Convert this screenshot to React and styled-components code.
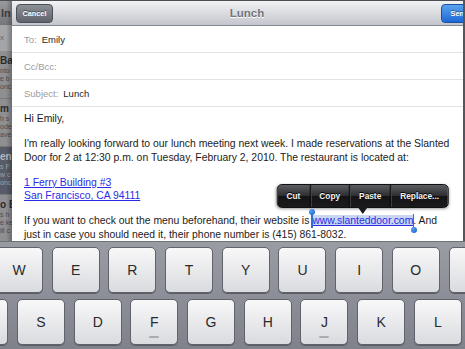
import React from 'react'
import styled, { createGlobalStyle } from 'styled-components'

const GlobalStyle = createGlobalStyle`
    html, body {
        margin: 0;
        padding: 0;
        background: #888;
        overflow: hidden;
    }
    #root {
        width: 465px;
        height: 349px;
    }
`

const Screen = styled.div`
    width: 465px;
    height: 349px;
    overflow: hidden;
    display: flex;
    flex-direction: column;
    font-family: "Liberation Sans", Arial, sans-serif;
    border-top: 1px solid #4e4f53;
    box-sizing: border-box;
`

const Upper = styled.div`
    height: 240px;
    display: flex;
    flex-shrink: 0;
`

/* dimmed mail list behind the compose sheet */
const ListStrip = styled.div`
    width: 12px;
    flex-shrink: 0;
    overflow: hidden;
    display: flex;
    flex-direction: column;
    background: #8d8d8f;
    position: relative;

    &::after {
        content: '';
        position: absolute;
        top: 0;
        right: 0;
        bottom: 0;
        width: 6px;
        background: linear-gradient(to right, rgba(0,0,0,0), rgba(0,0,0,0.25));
    }
`

const StripBar = styled.div`
    height: 24px;
    flex-shrink: 0;
    background: linear-gradient(#9a9b9f, #75767b);
    color: #3c3d42;
    font-size: 11px;
    font-weight: bold;
    line-height: 24px;
    padding-left: 1px;
    white-space: nowrap;
`

const StripSearch = styled.div`
    height: 26px;
    flex-shrink: 0;
    background: #a4a5a8;
    color: #6a6a6e;
    font-size: 8px;
    line-height: 26px;
    white-space: nowrap;
`

const StripItem = styled.div`
    height: 48px;
    flex-shrink: 0;
    box-sizing: border-box;
    padding-top: 4px;
    background: ${({ selected }) => (selected ? '#575c68' : '#8f8f91')};
    border-bottom: 1px solid #7a7a7c;
    white-space: nowrap;
    font-size: 7px;
    line-height: 8px;
    color: ${({ selected }) => (selected ? '#9ea3ad' : '#4a4a4e')};

    b {
        display: block;
        font-size: 10px;
        line-height: 12px;
        color: ${({ selected }) => (selected ? '#b5b9c2' : '#2a2a2c')};
    }
`

const Sheet = styled.div`
    flex: 1;
    overflow: hidden;
    display: flex;
    flex-direction: column;
    background: #fff;
    border-right: 2px solid #55565a;
`

const NavBar = styled.div`
    height: 24px;
    flex-shrink: 0;
    margin-right: -19px;
    padding: 0 4px;
    display: grid;
    grid-template-columns: 1fr auto 1fr;
    align-items: center;
    background: linear-gradient(#f1f2f4, #c3c6cc);
    border-bottom: 1px solid #858991;
`

const BarButton = styled.div`
    height: 19px;
    width: 37px;
    border-radius: 4px;
    box-sizing: border-box;
    display: flex;
    align-items: center;
    justify-content: center;
    justify-self: ${({ end }) => (end ? 'end' : 'start')};
    font-size: 7.3px;
    font-weight: bold;
    color: #fff;
    text-shadow: 0 -1px 0 rgba(0,0,0,0.4);
    border: 1px solid ${({ blue }) => (blue ? '#1d4f9c' : '#4e5057')};
    background: ${({ blue }) =>
        blue ? 'linear-gradient(#5aa2f0, #1e68d6)' : 'linear-gradient(#8c9097, #60636b)'};
`

const Title = styled.div`
    font-size: 11.5px;
    font-weight: bold;
    color: #71767f;
    text-shadow: 0 1px 0 #fff;
`

const Field = styled.div`
    height: 26px;
    flex-shrink: 0;
    display: flex;
    align-items: center;
    gap: 5px;
    padding-left: 12px;
    border-bottom: 1.5px solid #e3e3e5;
    font-size: 9.5px;
`

const Label = styled.span`
    color: #9b9b9e;
`

const Value = styled.span`
    color: #1e1e1e;
`

const Body = styled.div`
    padding: 5px 0 0 12px;
    font-size: 10.4px;
    line-height: 13.7px;
    color: #1c1c1c;
    white-space: nowrap;
`

const Para = styled.p`
    margin: 0 0 11.3px;
`

const Link = styled.span`
    color: #2b2be6;
    text-decoration: underline;
`

const Selection = styled.span`
    position: relative;
    background: #c9d6f2;
    color: #2b2be6;
    text-decoration: underline;
`

const Handle = styled.span`
    position: absolute;
    width: 1.5px;
    height: 15px;
    background: #2a6fd8;
    ${({ end }) => (end ? 'right: -1px; top: -1px;' : 'left: -1px; top: -2px;')}

    &::after {
        content: '';
        position: absolute;
        left: -2.25px;
        width: 6px;
        height: 6px;
        border-radius: 50%;
        background: radial-gradient(circle at 35% 35%, #5aa0ff, #0f58c8);
        ${({ end }) => (end ? 'bottom: -4px;' : 'top: -4px;')}
    }
`

const EditMenu = styled.div`
    position: absolute;
    bottom: 18px;
    left: 50%;
    transform: translateX(-50%);
    height: 22px;
    display: flex;
    border-radius: 5px;
    border: 1px solid #111;
    background: linear-gradient(#5c5d60 0%, #2c2d30 50%, #141416 51%, #1b1b1d 100%);
    box-shadow: 0 1px 3px rgba(0,0,0,0.4);

    &::after {
        content: '';
        position: absolute;
        left: 50%;
        top: 100%;
        margin-left: -5px;
        border: 5px solid transparent;
        border-top: 7px solid #1a1a1c;
        border-bottom: none;
    }
`

const MenuItem = styled.span`
    display: flex;
    align-items: center;
    padding: 0 9px;
    font-size: 8.3px;
    font-weight: bold;
    color: #f4f4f4;
    text-shadow: 0 -1px 0 #000;
    border-left: ${({ first }) => (first ? 'none' : '1px solid #0c0c0d')};
    box-shadow: ${({ first }) => (first ? 'none' : 'inset 1px 0 0 #4a4b4e')};
`

const Keyboard = styled.div`
    flex: 1;
    display: flex;
    flex-direction: column;
    gap: 6px;
    padding-top: 5px;
    overflow: hidden;
    background: linear-gradient(#9a9ca4, #7f828b);
    border-top: 1px solid #70727a;
`

const KeyRow = styled.div`
    display: flex;
    gap: 8.7px;
    margin-left: ${({ offset }) => offset}px;
`

const Key = styled.div`
    position: relative;
    width: 48px;
    height: 46px;
    flex-shrink: 0;
    box-sizing: border-box;
    border-radius: 5px;
    border: 1px solid #60636b;
    background: linear-gradient(#f8f8f9, #dadbdf);
    box-shadow: 0 1px 0 #5b5d64;
    display: flex;
    align-items: center;
    justify-content: center;
    font-size: 14px;
    color: #2a2a2c;

    &::after {
        content: '';
        display: ${({ bump }) => (bump ? 'block' : 'none')};
        position: absolute;
        left: 50%;
        bottom: 6px;
        width: 10px;
        margin-left: -5px;
        height: 2px;
        border-radius: 1px;
        background: #aaacb1;
    }
`

const stripItems = [
    { title: 'Ba', lines: ['nto', 'e b', 'onc'] },
    { title: 'm', lines: ['h s', 'ode', 'ave'] },
    { title: 'en', lines: ['s F', 'w c', 'onc'], selected: true },
    { title: 'o Bi', lines: ['s h', 'e ke', 'ill c'] },
]

const rowOne = ['W', 'E', 'R', 'T', 'Y', 'U', 'I', 'O', 'P']
const rowTwo = ['A', 'S', 'D', 'F', 'G', 'H', 'J', 'K', 'L']

function App() {
    return (
        <>
            <GlobalStyle />
            <Screen>
                <Upper>
                    <ListStrip>
                        <StripBar>In</StripBar>
                        <StripSearch>x</StripSearch>
                        {stripItems.map((item) => (
                            <StripItem key={item.title} selected={item.selected}>
                                <b>{item.title}</b>
                                {item.lines.map((l) => <div key={l}>{l}</div>)}
                            </StripItem>
                        ))}
                    </ListStrip>

                    <Sheet>
                        <NavBar>
                            <BarButton>Cancel</BarButton>
                            <Title>Lunch</Title>
                            <BarButton end blue>Send</BarButton>
                        </NavBar>
                        <Field><Label>To:</Label><Value>Emily</Value></Field>
                        <Field><Label>Cc/Bcc:</Label></Field>
                        <Field><Label>Subject:</Label><Value>Lunch</Value></Field>

                        <Body>
                            <Para>Hi Emily,</Para>
                            <Para>
                                I'm really looking forward to our lunch meeting next week. I made reservations at the Slanted<br />
                                Door for 2 at 12:30 p.m. on Tuesday, February 2, 2010. The restaurant is located at:
                            </Para>
                            <Para>
                                <Link>1 Ferry Building #3</Link><br />
                                <Link>San Francisco, CA 94111</Link>
                            </Para>
                            <Para>
                                If you want to check out the menu beforehand, their website is{' '}
                                <Selection>
                                    <EditMenu>
                                        <MenuItem first>Cut</MenuItem>
                                        <MenuItem>Copy</MenuItem>
                                        <MenuItem>Paste</MenuItem>
                                        <MenuItem>Replace...</MenuItem>
                                    </EditMenu>
                                    <Handle />
                                    www.slanteddoor.com
                                    <Handle end />
                                </Selection>. And<br />
                                just in case you should need it, their phone number is (415) 861-8032.
                            </Para>
                        </Body>
                    </Sheet>
                </Upper>

                <Keyboard>
                    <KeyRow offset={-5}>
                        {rowOne.map((k) => <Key key={k}>{k}</Key>)}
                    </KeyRow>
                    <KeyRow offset={-39.7}>
                        {rowTwo.map((k) => <Key key={k} bump={k === 'F' || k === 'J'}>{k}</Key>)}
                    </KeyRow>
                </Keyboard>
            </Screen>
        </>
    )
}

export default App
